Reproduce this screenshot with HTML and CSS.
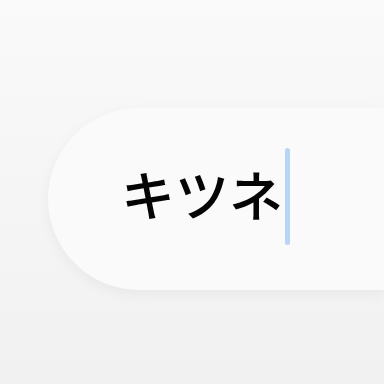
FILE: index.html
```html
<!doctype html>
<html lang="ja">

<head>
    <meta charset="UTF-8" />
    <meta name="viewport" content="width=device-width, initial-scale=1.0" />
    <title>Search</title>
    <link rel="stylesheet" href="styles.css">
</head>

<body>
    <div class="search-bar">
        <span class="search-text">キツネ</span>
        <span class="caret"></span>
    </div>
</body>

</html>
```

FILE: styles.css
```css
:root {
    --bg-top: #fafafa;
    --bg-bottom: #f1f1f1;
    --pill-color: #fafafa;
    --caret-color: #b8d5f7;
}

* {
    margin: 0;
    padding: 0;
    box-sizing: border-box;
}

body {
    height: 384px;
    overflow: hidden;
    background: linear-gradient(to bottom, var(--bg-top) 0%, #f6f6f6 40%, var(--bg-bottom) 100%);
    font-family: "Noto Sans CJK JP", "Noto Sans", sans-serif;
    padding-top: 108px;
    padding-left: 48px;
}

.search-bar {
    height: 182px;
    background-color: var(--pill-color);
    border-radius: 91px 0 0 91px;
    box-shadow: 0 4px 14px rgba(0, 0, 0, 0.05);
    display: flex;
    align-items: center;
    padding-left: 73px;
    gap: 2px;
}

.search-text {
    font-size: 54px;
    font-weight: 500;
    line-height: 1;
    color: #050505;
    margin-top: -10px;
}

.caret {
    width: 5px;
    height: 97px;
    border-radius: 3px;
    background-color: var(--caret-color);
    margin-top: -6px;
}
```
